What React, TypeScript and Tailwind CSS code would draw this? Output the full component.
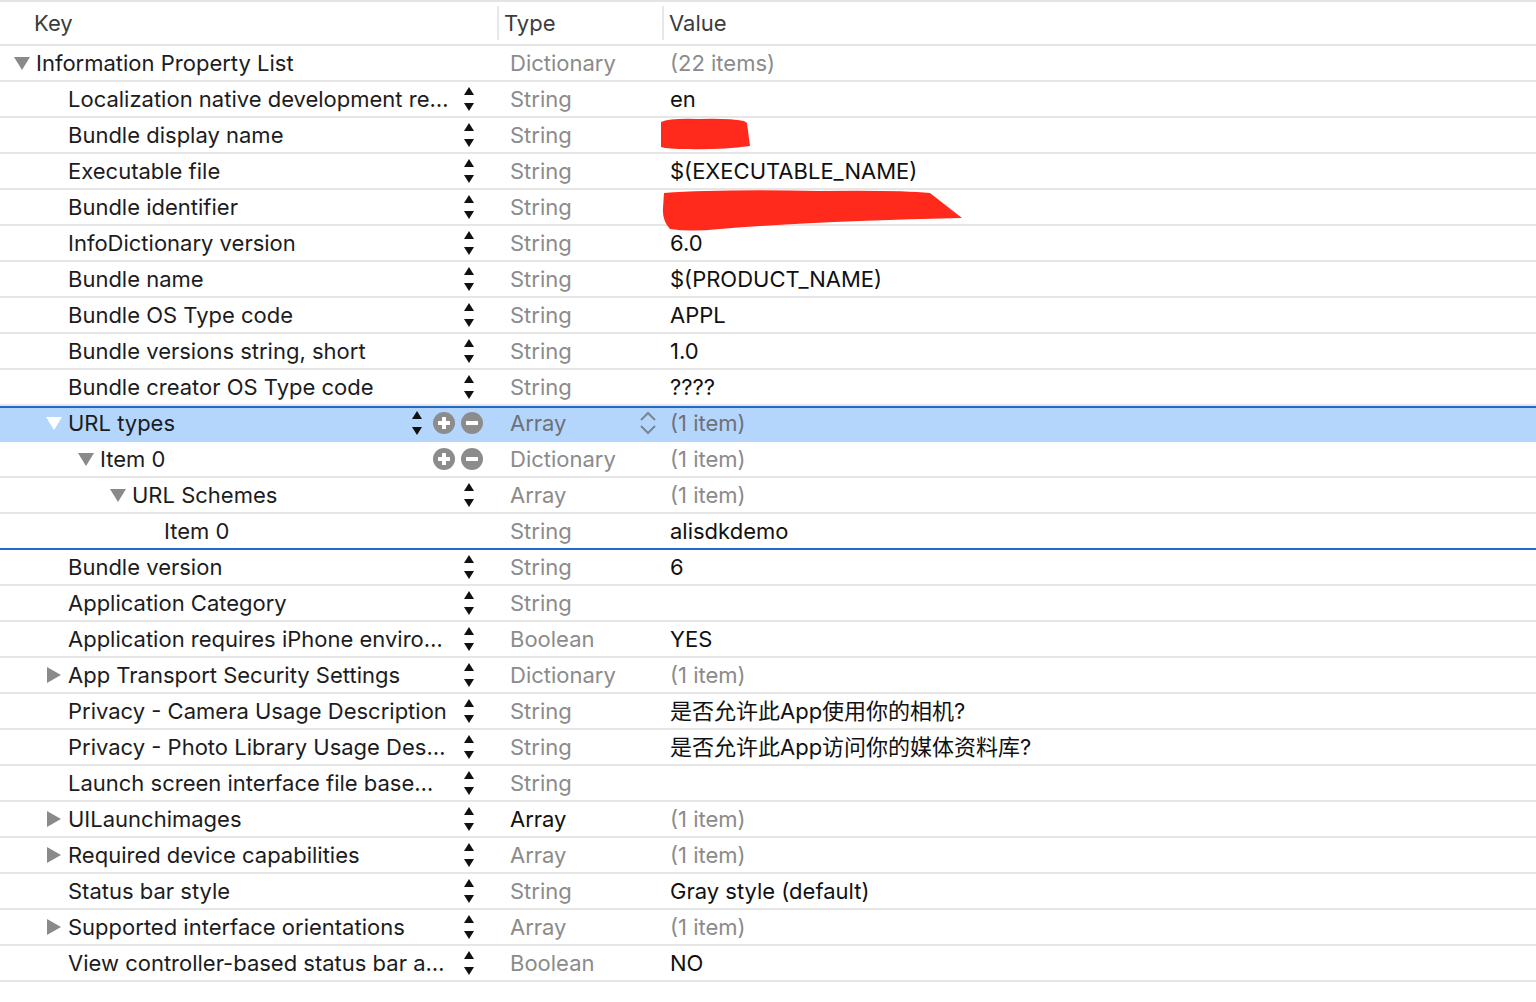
import React from "react";

type Row = {
  key: string;
  type: string;
  value?: string;
  level: number;
  tri?: "down" | "right";
  stepper?: boolean;
  plusMinus?: boolean;
  selected?: boolean;
  typeDark?: boolean;
  valueGray?: boolean;
  blob?: 1 | 2;
  bottomBlue?: boolean;
};

const rows: Row[] = [
  { key: "Information Property List", type: "Dictionary", value: "(22 items)", level: 0, tri: "down", valueGray: true },
  { key: "Localization native development re…", type: "String", value: "en", level: 1, stepper: true },
  { key: "Bundle display name", type: "String", level: 1, stepper: true, blob: 1 },
  { key: "Executable file", type: "String", value: "$(EXECUTABLE_NAME)", level: 1, stepper: true },
  { key: "Bundle identifier", type: "String", level: 1, stepper: true, blob: 2 },
  { key: "InfoDictionary version", type: "String", value: "6.0", level: 1, stepper: true },
  { key: "Bundle name", type: "String", value: "$(PRODUCT_NAME)", level: 1, stepper: true },
  { key: "Bundle OS Type code", type: "String", value: "APPL", level: 1, stepper: true },
  { key: "Bundle versions string, short", type: "String", value: "1.0", level: 1, stepper: true },
  { key: "Bundle creator OS Type code", type: "String", value: "????", level: 1, stepper: true },
  { key: "URL types", type: "Array", value: "(1 item)", level: 1, tri: "down", stepper: true, plusMinus: true, selected: true, valueGray: true },
  { key: "Item 0", type: "Dictionary", value: "(1 item)", level: 2, tri: "down", plusMinus: true, valueGray: true },
  { key: "URL Schemes", type: "Array", value: "(1 item)", level: 3, tri: "down", stepper: true, valueGray: true },
  { key: "Item 0", type: "String", value: "alisdkdemo", level: 4, bottomBlue: true },
  { key: "Bundle version", type: "String", value: "6", level: 1, stepper: true },
  { key: "Application Category", type: "String", value: "", level: 1, stepper: true },
  { key: "Application requires iPhone enviro…", type: "Boolean", value: "YES", level: 1, stepper: true },
  { key: "App Transport Security Settings", type: "Dictionary", value: "(1 item)", level: 1, tri: "right", stepper: true, valueGray: true },
  { key: "Privacy - Camera Usage Description", type: "String", value: "是否允许此App使用你的相机?", level: 1, stepper: true },
  { key: "Privacy - Photo Library Usage Des…", type: "String", value: "是否允许此App访问你的媒体资料库?", level: 1, stepper: true },
  { key: "Launch screen interface file base…", type: "String", value: "", level: 1, stepper: true },
  { key: "UILaunchimages", type: "Array", value: "(1 item)", level: 1, tri: "right", stepper: true, typeDark: true, valueGray: true },
  { key: "Required device capabilities", type: "Array", value: "(1 item)", level: 1, tri: "right", stepper: true, valueGray: true },
  { key: "Status bar style", type: "String", value: "Gray style (default)", level: 1, stepper: true },
  { key: "Supported interface orientations", type: "Array", value: "(1 item)", level: 1, tri: "right", stepper: true, valueGray: true },
  { key: "View controller-based status bar a…", type: "Boolean", value: "NO", level: 1, stepper: true },
];

const levelPad = ["pl-[14px]", "pl-[46px]", "pl-[78px]", "pl-[110px]", "pl-[142px]"];

function Triangle({ dir, white }: { dir: "down" | "right"; white?: boolean }) {
  const fill = white ? "#ffffff" : "#8a8a8a";
  return (
    <svg width="16" height="16" viewBox="0 0 16 16" className="shrink-0">
      {dir === "down" ? (
        <polygon points="0,2 16,2 8,15" fill={fill} />
      ) : (
        <polygon points="1,0 15,8 1,16" fill={fill} />
      )}
    </svg>
  );
}

function Stepper() {
  return (
    <svg width="10" height="28" viewBox="0 0 10 28" className="shrink-0">
      <polygon points="5,2 10,10 0,10" fill="#111" />
      <polygon points="0,18 10,18 5,26" fill="#111" />
    </svg>
  );
}

function Circle({ kind }: { kind: "plus" | "minus" }) {
  return (
    <svg width="22" height="22" viewBox="0 0 22 22" className="shrink-0">
      <circle cx="11" cy="11" r="11" fill="#8c8c8c" />
      <rect x="5" y="9" width="12" height="4" rx="0.5" fill="#fff" />
      {kind === "plus" && <rect x="9" y="5" width="4" height="12" rx="0.5" fill="#fff" />}
    </svg>
  );
}

function Chevrons() {
  return (
    <svg width="18" height="28" viewBox="0 0 18 28" className="shrink-0">
      <polyline points="2,11 9,4 16,11" fill="none" stroke="#7b8594" strokeWidth="2" />
      <polyline points="2,17 9,24 16,17" fill="none" stroke="#7b8594" strokeWidth="2" />
    </svg>
  );
}

function Blob({ n }: { n: 1 | 2 }) {
  if (n === 1) {
    return (
      <svg width="96" height="34" viewBox="0 0 96 34" className="absolute left-[-4px] top-[0px]">
        <path d="M3 4 Q 12 0 40 1 Q 70 0 86 3 L 89 5 L 92 28 Q 60 32 30 31 Q 10 31 3 29 Z" fill="#ff2a1c" />
      </svg>
    );
  }
  return (
    <svg width="306" height="44" viewBox="0 0 306 44" className="absolute left-[-2px] top-[0px]">
      <path d="M4 3 Q 60 -1 160 1 Q 240 0 270 3 L 302 28 Q 250 29 200 31 Q 120 34 60 39 Q 30 42 10 39 Q 2 30 3 18 Z" fill="#ff2a1c" />
    </svg>
  );
}

export default function App() {
  return (
    <div
      className="w-[1536px] h-[1002px] bg-white overflow-hidden text-[22px] text-[#1c1c1e]"
      style={{ fontFamily: "Inter, 'Noto Sans CJK SC', sans-serif" }}
    >
      {/* header */}
      <div className="grid grid-cols-[497px_165px_1fr] h-[46px] border-t-2 border-b-2 border-[#e4e4e4] text-[#3c3c3c]">
        <div className="flex items-center pl-[34px]">Key</div>
        <div className="flex items-center pl-[5px] border-l-2 border-[#e8e8e8] my-[4px]">Type</div>
        <div className="flex items-center pl-[5px] border-l-2 border-[#e8e8e8] my-[4px]">Value</div>
      </div>
      {rows.map((r, i) => (
        <div
          key={i}
          className={
            "grid grid-cols-[497px_165px_1fr] h-[36px] border-b-2 " +
            (r.selected ? "bg-[#b4d6fd] border-[#b4d6fd] " : "border-[#e6e6e6] ") +
            (r.bottomBlue ? "!border-[#2369cc] " : "") +
            (r.selected ? "shadow-[inset_0_2px_0_#2369cc]" : "")
          }
        >
          <div className={"flex items-center " + levelPad[r.level] + (r.plusMinus ? " pr-[14px]" : " pr-[23px]")}>
            {r.tri ? <Triangle dir={r.tri} white={r.selected} /> : <div className="w-[16px] shrink-0" />}
            <span className="ml-[6px] whitespace-nowrap">{r.key}</span>
            <div className="ml-auto flex items-center">
              {r.stepper && <Stepper />}
              {r.plusMinus && (
                <div className="flex items-center gap-[6px] ml-[11px]">
                  <Circle kind="plus" />
                  <Circle kind="minus" />
                </div>
              )}
            </div>
          </div>
          <div
            className={
              "flex items-center pl-[13px] pr-[5px] " +
              (r.typeDark ? "text-[#111]" : r.selected ? "text-[#6d717a]" : "text-[#8b8b8b]")
            }
          >
            <span>{r.type}</span>
            {r.selected && (
              <div className="ml-auto">
                <Chevrons />
              </div>
            )}
          </div>
          <div
            className={
              "relative flex items-center pl-[8px] " +
              (r.valueGray ? (r.selected ? "text-[#6d717a]" : "text-[#8b8b8b]") : "text-[#111]")
            }
          >
            {r.blob && <Blob n={r.blob} />}
            <span className="whitespace-nowrap">{r.value}</span>
          </div>
        </div>
      ))}
    </div>
  );
}
